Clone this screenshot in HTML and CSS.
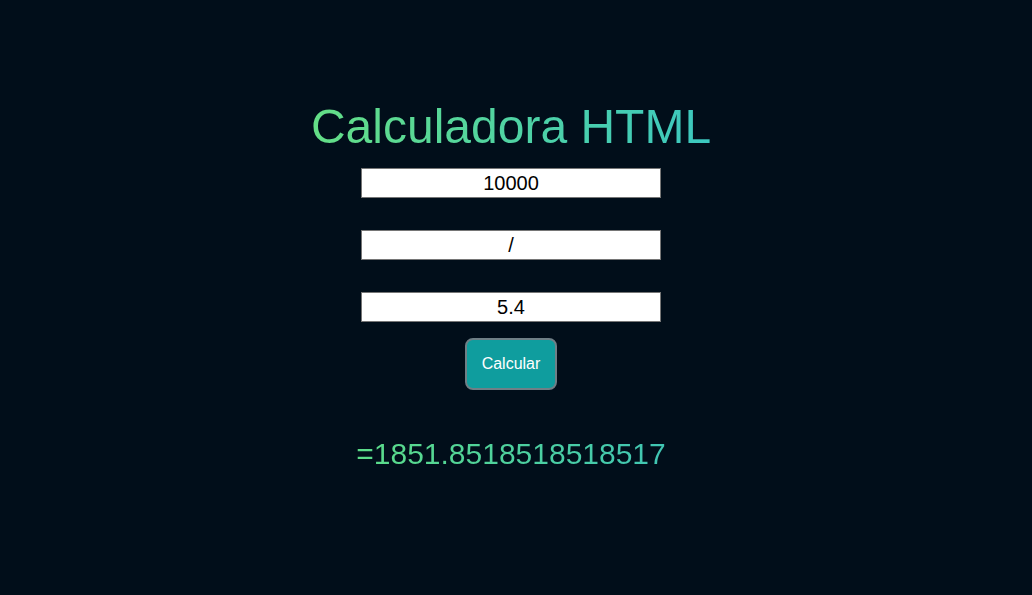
FILE: index.html
```html
<!DOCTYPE html>
<html lang="pt">
<head>
<meta charset="utf-8">
<title>Calculadora HTML</title>
<link rel="stylesheet" href="styles.css">
</head>
<body>
<main class="calc">
  <h1 class="title">Calculadora HTML</h1>
  <input class="field" type="text" value="10000">
  <input class="field" type="text" value="/">
  <input class="field" type="text" value="5.4">
  <button class="btn" type="button">Calcular</button>
  <p class="result">=1851.8518518518517</p>
</main>
</body>
</html>
```

FILE: styles.css
```css
html, body {
  margin: 0;
  padding: 0;
  height: 100%;
}
body {
  background: #010e1a;
  font-family: "Liberation Sans", Arial, sans-serif;
}
.calc {
  display: flex;
  flex-direction: column;
  align-items: center;
  padding-top: 97px;
  padding-right: 10px;
}
.title {
  margin: 0 0 11px;
  font-size: 48px;
  font-weight: normal;
  line-height: 60px;
  background: linear-gradient(90deg, #64de86, #3cc8c0);
  -webkit-background-clip: text;
  background-clip: text;
  color: transparent;
}
.field {
  box-sizing: border-box;
  width: 300px;
  height: 30px;
  margin: 0 0 32px;
  border: 1px solid #767676;
  background: #fff;
  color: #000;
  font-family: "Liberation Sans", Arial, sans-serif;
  font-size: 20px;
  text-align: center;
  padding: 0;
}
.field:last-of-type {
  margin-bottom: 16px;
}
.btn {
  box-sizing: border-box;
  width: 92px;
  height: 52px;
  border: 2px solid #6f7f86;
  border-radius: 8px;
  background: #0f9d9e;
  color: #fff;
  font-family: "Liberation Sans", Arial, sans-serif;
  font-size: 16px;
}
.result {
  margin: 46px 0 0;
  font-size: 30px;
  line-height: 36px;
  background: linear-gradient(90deg, #5cdc88, #40c6b4);
  -webkit-background-clip: text;
  background-clip: text;
  color: transparent;
}
```
